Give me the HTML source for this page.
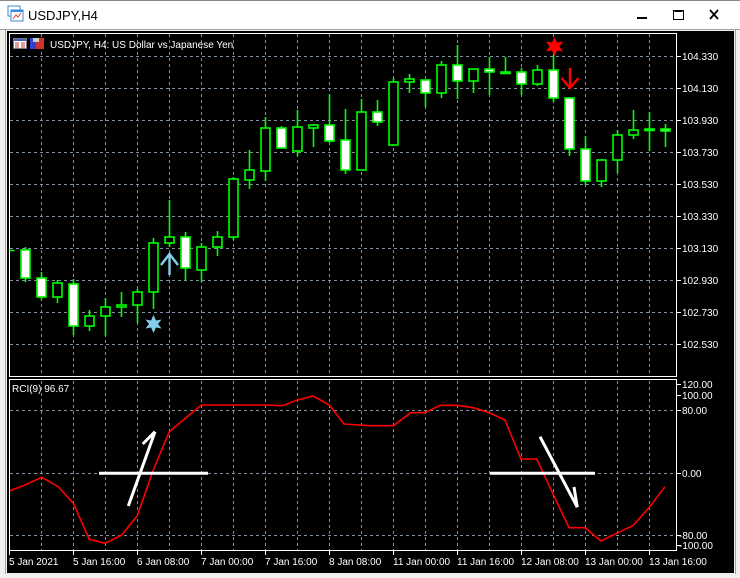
<!DOCTYPE html>
<html><head><meta charset="utf-8"><style>
html,body{margin:0;padding:0;width:740px;height:578px;overflow:hidden;background:#f0f0f0;}
svg{display:block}
</style></head><body>
<svg width="740" height="578" xmlns="http://www.w3.org/2000/svg" font-family="Liberation Sans, sans-serif">
<rect x="0" y="0" width="740" height="578" fill="#f0f0f0"/>
<rect x="0" y="0" width="740" height="30" fill="#ffffff"/>
<line x1="0" y1="0.5" x2="740" y2="0.5" stroke="#888"/>
<rect x="8" y="6" width="12" height="10" fill="#fff" stroke="#3a8ad8"/>
<rect x="11" y="10" width="12" height="11" fill="#fff" stroke="#3a8ad8"/>
<rect x="11" y="10" width="12" height="2" fill="#3a8ad8"/>
<polyline points="13,19 16,15 18,17 21,13" fill="none" stroke="#e04040" stroke-width="1"/>
<text x="28" y="20" font-size="13" fill="#000">USDJPY,H4</text>
<rect x="637" y="17" width="10" height="2" fill="#000"/>
<rect x="673.5" y="10.5" width="10" height="9" fill="none" stroke="#000"/>
<line x1="674.5" y1="11.5" x2="682.5" y2="11.5" stroke="#000"/>
<path d="M710 10 L718 19 M718 10 L710 19" stroke="#000" stroke-width="1.8"/>
<line x1="0" y1="29.5" x2="740" y2="29.5" stroke="#a0a0a0"/>
<line x1="5.5" y1="30" x2="5.5" y2="574" stroke="#a0a0a0"/>
<line x1="735.5" y1="30" x2="735.5" y2="574" stroke="#a0a0a0"/>
<rect x="7" y="31" width="727" height="542" fill="#000"/>
<g stroke="#8090a0" stroke-dasharray="3,3" stroke-width="1">
<path d="M41.5 34V376M73.5 34V376M105.5 34V376M137.5 34V376M169.5 34V376M201.5 34V376M233.5 34V376M265.5 34V376M297.5 34V376M329.5 34V376M361.5 34V376M393.5 34V376M425.5 34V376M457.5 34V376M489.5 34V376M521.5 34V376M553.5 34V376M585.5 34V376M617.5 34V376M649.5 34V376"/>
<path d="M41.5 381V550M73.5 381V550M105.5 381V550M137.5 381V550M169.5 381V550M201.5 381V550M233.5 381V550M265.5 381V550M297.5 381V550M329.5 381V550M361.5 381V550M393.5 381V550M425.5 381V550M457.5 381V550M489.5 381V550M521.5 381V550M553.5 381V550M585.5 381V550M617.5 381V550M649.5 381V550"/>
<path d="M10 56.5H676M10 88.5H676M10 120.5H676M10 152.5H676M10 184.5H676M10 216.5H676M10 248.5H676M10 280.5H676M10 312.5H676M10 344.5H676"/>
<path d="M10 410.5H676M10 473.5H676M10 535.5H676"/>
</g>
<rect x="9.5" y="33.5" width="667" height="343" fill="none" stroke="#fff"/>
<rect x="9.5" y="379.5" width="667" height="171" fill="none" stroke="#fff"/>
<g stroke="#fff"><path d="M677 56.5h4M677 88.5h4M677 120.5h4M677 152.5h4M677 184.5h4M677 216.5h4M677 248.5h4M677 280.5h4M677 312.5h4M677 344.5h4M677 384.5h4M677 395.5h4M677 410.5h4M677 473.5h4M677 535.5h4M677 545.5h4"/></g>
<g fill="#fff" font-size="10">
<text x="682" y="60">104.330</text><text x="682" y="92">104.130</text><text x="682" y="124">103.930</text><text x="682" y="156">103.730</text><text x="682" y="188">103.530</text><text x="682" y="220">103.330</text><text x="682" y="252">103.130</text><text x="682" y="284">102.930</text><text x="682" y="316">102.730</text><text x="682" y="348">102.530</text>
<text x="682" y="388">120.00</text><text x="682" y="399">100.00</text><text x="682" y="414">80.00</text><text x="682" y="477">0.00</text><text x="679" y="539">-80.00</text><text x="679" y="549">-100.00</text>
</g>
<g stroke="#fff"><path d="M9.5 551v4M73.5 551v4M137.5 551v4M201.5 551v4M265.5 551v4M329.5 551v4M393.5 551v4M457.5 551v4M521.5 551v4M585.5 551v4M649.5 551v4"/></g>
<g fill="#fff" font-size="10">
<text x="9" y="565">5 Jan 2021</text><text x="73" y="565">5 Jan 16:00</text><text x="137" y="565">6 Jan 08:00</text><text x="201" y="565">7 Jan 00:00</text><text x="265" y="565">7 Jan 16:00</text><text x="329" y="565">8 Jan 08:00</text><text x="393" y="565">11 Jan 00:00</text><text x="457" y="565">11 Jan 16:00</text><text x="521" y="565">12 Jan 08:00</text><text x="585" y="565">13 Jan 00:00</text><text x="649" y="565">13 Jan 16:00</text>
</g>
<rect x="13.5" y="38.5" width="13" height="10" fill="#fff" stroke="#777"/>
<rect x="14" y="39" width="12" height="2" fill="#4060c0"/>
<path d="M15 43h4M21 43h4M15 45h4M21 45h4M15 47h4M21 47h4" stroke="#c04040"/>
<rect x="30" y="38" width="7" height="11" fill="#3040d0"/>
<rect x="36" y="38" width="8" height="11" fill="#d03030"/>
<rect x="33" y="38" width="6" height="4" fill="#ccc"/>
<text x="50" y="48" font-size="10" fill="#fff">USDJPY, H4:  US Dollar vs Japanese Yen</text>
<text x="12" y="392" font-size="10" fill="#fff">RCI(9) 96.67</text>
<g stroke="#00ff00" stroke-width="1.6">
<path d="M9.5 250.5h5"/>
<path d="M25.5 247V282M41.5 272V300M57.5 280V303M73.5 279V335M89.5 310V331M105.5 298V336M121.5 292V317M137.5 289V323M153.5 238V309M169.5 200V247M185.5 232V281M201.5 243V282M217.5 231V256M233.5 177V240M249.5 150V189M265.5 117V181M281.5 126V148M297.5 110V156M313.5 124V147M329.5 94V143M345.5 109V174M361.5 99V170M377.5 100V126M393.5 78V145M409.5 74V93M425.5 80V107M441.5 61V98M457.5 45V99M473.5 69V93M489.5 57V95M505.5 57V74M521.5 68V95M537.5 65V86M553.5 55V102M569.5 97V156M585.5 136V185M601.5 159V187M617.5 130V173M633.5 110V139M649.5 112V151M665.5 124V147"/>
<g fill="#fff">
<rect x="21" y="250" width="9" height="28"/><rect x="37" y="278" width="9" height="19"/><rect x="69" y="284" width="9" height="42"/><rect x="181" y="237" width="9" height="31"/><rect x="277" y="128" width="9" height="20"/><rect x="325" y="125" width="9" height="16"/><rect x="341" y="140" width="9" height="30"/><rect x="373" y="112" width="9" height="10"/><rect x="421" y="80" width="9" height="13"/><rect x="453" y="65" width="9" height="16"/><rect x="485" y="69" width="9" height="3"/><rect x="501" y="72" width="9" height="1.5"/><rect x="517" y="72" width="9" height="12"/><rect x="549" y="70" width="9" height="28"/><rect x="565" y="98" width="9" height="51"/><rect x="581" y="149" width="9" height="32"/><rect x="645" y="129" width="9" height="1.5"/><rect x="661" y="129" width="9" height="2"/>
</g>
<g fill="#000">
<rect x="53" y="283" width="9" height="14"/><rect x="85" y="316" width="9" height="10"/><rect x="101" y="307" width="9" height="9"/><rect x="117" y="305" width="9" height="2"/><rect x="133" y="292" width="9" height="13"/><rect x="149" y="243" width="9" height="49"/><rect x="165" y="237" width="9" height="6"/><rect x="197" y="247" width="9" height="23"/><rect x="213" y="237" width="9" height="10"/><rect x="229" y="179" width="9" height="58"/><rect x="245" y="170" width="9" height="10"/><rect x="261" y="128" width="9" height="43"/><rect x="293" y="127" width="9" height="24"/><rect x="309" y="125" width="9" height="3"/><rect x="357" y="112" width="9" height="58"/><rect x="389" y="82" width="9" height="63"/><rect x="405" y="79" width="9" height="3"/><rect x="437" y="65" width="9" height="28"/><rect x="469" y="69" width="9" height="12"/><rect x="533" y="70" width="9" height="14"/><rect x="597" y="160" width="9" height="21"/><rect x="613" y="135" width="9" height="25"/><rect x="629" y="130" width="9" height="5"/>
</g>
</g>
<polyline fill="none" stroke="#ff0000" stroke-width="1.6" points="10,490.7 25,485 41.7,477.3 58.3,486.7 73.3,503.3 89.3,539.3 105.3,543.3 121.7,535 137.3,515.7 153.3,470 169.3,431.7 185.3,418.3 201.3,405 265.3,405 282.7,405.7 297.3,400 313.3,396 329.3,405 344,424 370,425.7 393.3,425.7 410.7,412.7 425,412.7 440,405.3 456.7,405.3 473.3,407.7 489.3,412.7 505,420 521,459 536.7,459 552.7,493.3 569,527.7 585,527.7 601,541 616.7,533.3 633.3,525.3 649.3,507.3 665,486.7"/>
<g stroke="#fff" stroke-width="3" fill="none">
<line x1="99" y1="473.3" x2="208" y2="473.3"/>
<path d="M128.3 506 L155 431.7 M142.7 444 L155 431.7"/>
<line x1="490" y1="473.3" x2="595" y2="473.3"/>
<path d="M540 436.7 L577.3 507.3 M574 487 L577.3 507.3"/>
</g>
<g stroke="#87ceeb" stroke-width="2.4" fill="none"><path d="M169.5 275 V254 M161 265 L169.5 254 L178 265"/></g>
<g fill="#87ceeb"><path d="M153.5 315 L156 320.5 L161.5 319.5 L158 324 L161.5 328.5 L156 327.5 L153.5 333 L151 327.5 L145.5 328.5 L149 324 L145.5 319.5 L151 320.5 Z"/></g>
<g fill="#ff0000"><path d="M554.5 37 L557 42.5 L563 41.5 L559.5 46.5 L563 51.5 L557 50.5 L554.5 56 L552 50.5 L546 51.5 L549.5 46.5 L546 41.5 L552 42.5 Z"/></g>
<g stroke="#ff0000" stroke-width="2.4" fill="none"><path d="M570 68 V88 M561.5 78 L570 88 L578.5 78"/></g>
</svg>
</body></html>
